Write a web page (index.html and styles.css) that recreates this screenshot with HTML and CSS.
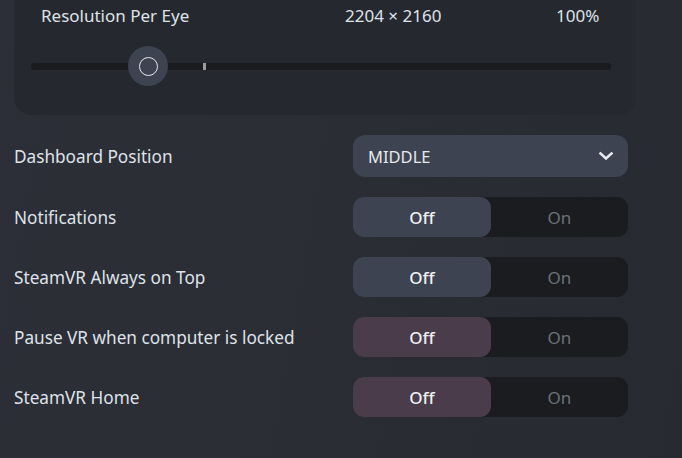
FILE: index.html
```html
<!DOCTYPE html>
<html>
<head>
<meta charset="utf-8">
<link rel="stylesheet" href="styles.css">
</head>
<body>
<div class="page">
  <section class="card">
    <div class="res-row">
      <span class="res-label">Resolution Per Eye</span>
      <span class="res-value">2204 × 2160</span>
      <span class="res-pct">100%</span>
    </div>
    <div class="slider">
      <div class="track"></div>
      <div class="tick"></div>
      <div class="knob"><span class="knob-ring"></span></div>
    </div>
  </section>

  <div class="settings">
    <div class="row">
      <span class="label">Dashboard Position</span>
      <div class="dropdown">
        <span>MIDDLE</span>
        <svg class="chevron" width="16" height="12" viewBox="0 0 16 12"><path d="M2.5 3.5 L8 8.5 L13.5 3.5" fill="none" stroke="#e6e9ee" stroke-width="2.6" stroke-linecap="square"/></svg>
      </div>
    </div>
    <div class="row">
      <span class="label">Notifications</span>
      <div class="toggle"><span class="opt off">Off</span><span class="opt on">On</span></div>
    </div>
    <div class="row">
      <span class="label">SteamVR Always on Top</span>
      <div class="toggle"><span class="opt off">Off</span><span class="opt on">On</span></div>
    </div>
    <div class="row">
      <span class="label">Pause VR when computer is locked</span>
      <div class="toggle"><span class="opt off alt">Off</span><span class="opt on">On</span></div>
    </div>
    <div class="row">
      <span class="label">SteamVR Home</span>
      <div class="toggle"><span class="opt off alt">Off</span><span class="opt on">On</span></div>
    </div>
  </div>
</div>
</body>
</html>
```
FILE: styles.css
```css
html, body {
  margin: 0;
  padding: 0;
}
body {
  width: 682px;
  height: 458px;
  overflow: hidden;
  background: linear-gradient(100deg, #2c2f37 0%, #2a2d34 50%, #272a31 100%);
  font-family: "Noto Sans", "Open Sans", sans-serif;
  color: #dfe3e8;
}
.page {
  padding: 0 0 0 14px;
}
.card {
  width: 622px;
  margin-top: -20px;
  height: 135px;
  box-sizing: border-box;
  background: #25282f;
  border-radius: 18px;
  padding-top: 19px;
}
.res-row {
  display: flex;
  align-items: center;
  height: 32px;
  padding-left: 27px;
  font-size: 17px;
  color: #dfe3e8;
}
.res-label {
  width: 304px;
}
.res-value {
  width: 211px;
}
.slider {
  position: relative;
  margin: 15px 25px 0 17px;
  height: 40px;
  display: flex;
  align-items: center;
}
.track {
  width: 100%;
  height: 7px;
  border-radius: 4px;
  background: #1a1b1f;
}
.tick {
  position: absolute;
  left: 172px;
  top: 17px;
  width: 3px;
  height: 7px;
  background: #9a9ca0;
}
.knob {
  position: absolute;
  left: 97px;
  top: 0;
  width: 40px;
  height: 40px;
  border-radius: 50%;
  background: #3d4350;
  display: flex;
  align-items: center;
  justify-content: center;
}
.knob-ring {
  width: 17px;
  height: 17px;
  border-radius: 50%;
  border: 1.5px solid #e8eaee;
}
.settings {
  margin-top: 20px;
  width: 614px;
  display: flex;
  flex-direction: column;
  gap: 20px;
}
.row {
  display: flex;
  align-items: center;
  justify-content: space-between;
}
.label {
  font-size: 17.2px;
  color: #dfe3e8;
}
.dropdown {
  width: 275px;
  height: 42px;
  box-sizing: border-box;
  border-radius: 12px;
  background: #3d4350;
  display: flex;
  align-items: center;
  justify-content: space-between;
  padding: 0 14px 0 15px;
  font-size: 16.5px;
  color: #e6e9ee;
}
.chevron {
  display: block;
}
.toggle {
  width: 275px;
  height: 40px;
  border-radius: 11px;
  background: #1b1c20;
  display: flex;
}
.opt {
  width: 138px;
  display: flex;
  align-items: center;
  justify-content: center;
  font-size: 17px;
}
.off {
  background: #3d4350;
  border-radius: 11px;
  color: #eef0f3;
  font-weight: 500;
}
.off.alt {
  background: #4a3c4b;
}
.on {
  flex: 1;
  color: #69727a;
}
```
